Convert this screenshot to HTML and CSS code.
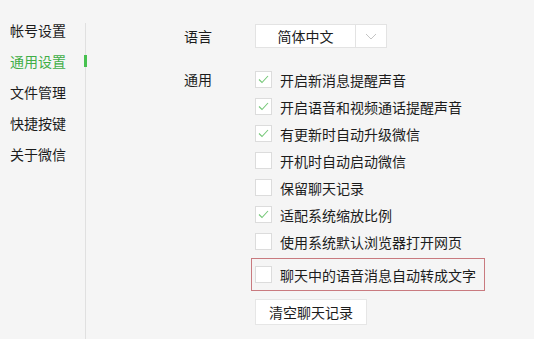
FILE: index.html
```html
<!DOCTYPE html>
<html lang="zh-CN">
<head>
    <meta charset="UTF-8">
    <meta name="viewport" content="width=device-width, initial-scale=1.0">
    <title>通用设置</title>
    <link rel="stylesheet" href="styles.css">
</head>
<body>
    <div class="layout">
        <nav class="sidebar">
            <div class="nav-item">帐号设置</div>
            <div class="nav-item active">通用设置</div>
            <div class="nav-item">文件管理</div>
            <div class="nav-item">快捷按键</div>
            <div class="nav-item">关于微信</div>
        </nav>
        <div class="divider"></div>

        <main class="settings">
            <div class="setting-row lang-row">
                <div class="label">语言</div>
                <div class="select">
                    <span class="select-value">简体中文</span>
                    <span class="select-arrow">
                        <svg width="12" height="7" viewBox="0 0 12 7"><polyline points="1,1 6,6 11,1" fill="none" stroke="#c4c4c4" stroke-width="1"/></svg>
                    </span>
                </div>
            </div>

            <div class="setting-row">
                <div class="label general-label">通用</div>
                <div class="options">
                    <label class="option"><span class="checkbox checked"></span>开启新消息提醒声音</label>
                    <label class="option"><span class="checkbox checked"></span>开启语音和视频通话提醒声音</label>
                    <label class="option"><span class="checkbox checked"></span>有更新时自动升级微信</label>
                    <label class="option"><span class="checkbox"></span>开机时自动启动微信</label>
                    <label class="option"><span class="checkbox"></span>保留聊天记录</label>
                    <label class="option"><span class="checkbox checked"></span>适配系统缩放比例</label>
                    <label class="option"><span class="checkbox"></span>使用系统默认浏览器打开网页</label>
                    <label class="option highlight"><span class="checkbox"></span>聊天中的语音消息自动转成文字</label>
                    <button class="clear-btn">清空聊天记录</button>
                </div>
            </div>
        </main>
    </div>
</body>
</html>
```

FILE: styles.css
```css
* {
    box-sizing: border-box;
    margin: 0;
    padding: 0;
}

body {
    font-family: "Noto Sans CJK SC", "Liberation Sans", sans-serif;
    font-size: 14px;
    color: #1c1c1c;
    background-color: #f5f5f5;
}

.layout {
    display: flex;
    height: 339px;
    overflow: hidden;
}

.sidebar {
    width: 85px;
    padding-top: 15px;
}

.nav-item {
    position: relative;
    height: 31px;
    line-height: 31px;
    padding-left: 10px;
}

.nav-item.active {
    color: #3fae47;
}

/* green marker sitting on the divider line */
.nav-item.active::after {
    content: "";
    position: absolute;
    right: -2px;
    top: 9px;
    width: 3px;
    height: 12px;
    background-color: #47c14f;
}

.divider {
    width: 1px;
    margin-top: 23px;
    background-color: #e0e0e0;
}

.settings {
    flex: 1;
    padding: 24px 0 0 98px;
}

.setting-row {
    display: flex;
}

.label {
    width: 71px;
}

.lang-row {
    align-items: center;
    margin-bottom: 18px;
}

.general-label {
    line-height: 27px;
}

.select {
    display: flex;
    width: 132px;
    height: 24px;
    background-color: #fff;
    border: 1px solid #e3e3e3;
}

.select-value {
    width: 100px;
    line-height: 22px;
    text-align: center;
    border-right: 1px solid #e3e3e3;
}

.select-arrow {
    flex: 1;
    display: flex;
    align-items: center;
    justify-content: center;
}

.options {
    display: flex;
    flex-direction: column;
    align-items: flex-start;
}

.option {
    display: flex;
    align-items: center;
    gap: 8px;
    height: 27px;
}

.checkbox {
    width: 17px;
    height: 17px;
    background-color: #fff;
    border: 1px solid #dcdcdc;
}

.checkbox.checked {
    background-image: url("data:image/svg+xml,%3Csvg xmlns='http://www.w3.org/2000/svg' width='15' height='15' viewBox='0 0 15 15'%3E%3Cpolyline points='3,7.5 6,10.5 12,4' fill='none' stroke='%2375c878' stroke-width='1.1'/%3E%3C/svg%3E");
    background-repeat: no-repeat;
}

.option.highlight {
    width: 234px;
    height: 33px;
    margin: 3px 0 0 -4px;
    padding-left: 3px;
    border: 1px solid #c97a7f;
}

.clear-btn {
    margin-top: 8px;
    width: 112px;
    height: 26px;
    font: inherit;
    color: inherit;
    background-color: #fff;
    border: 1px solid #e6e6e6;
    cursor: pointer;
}
```
